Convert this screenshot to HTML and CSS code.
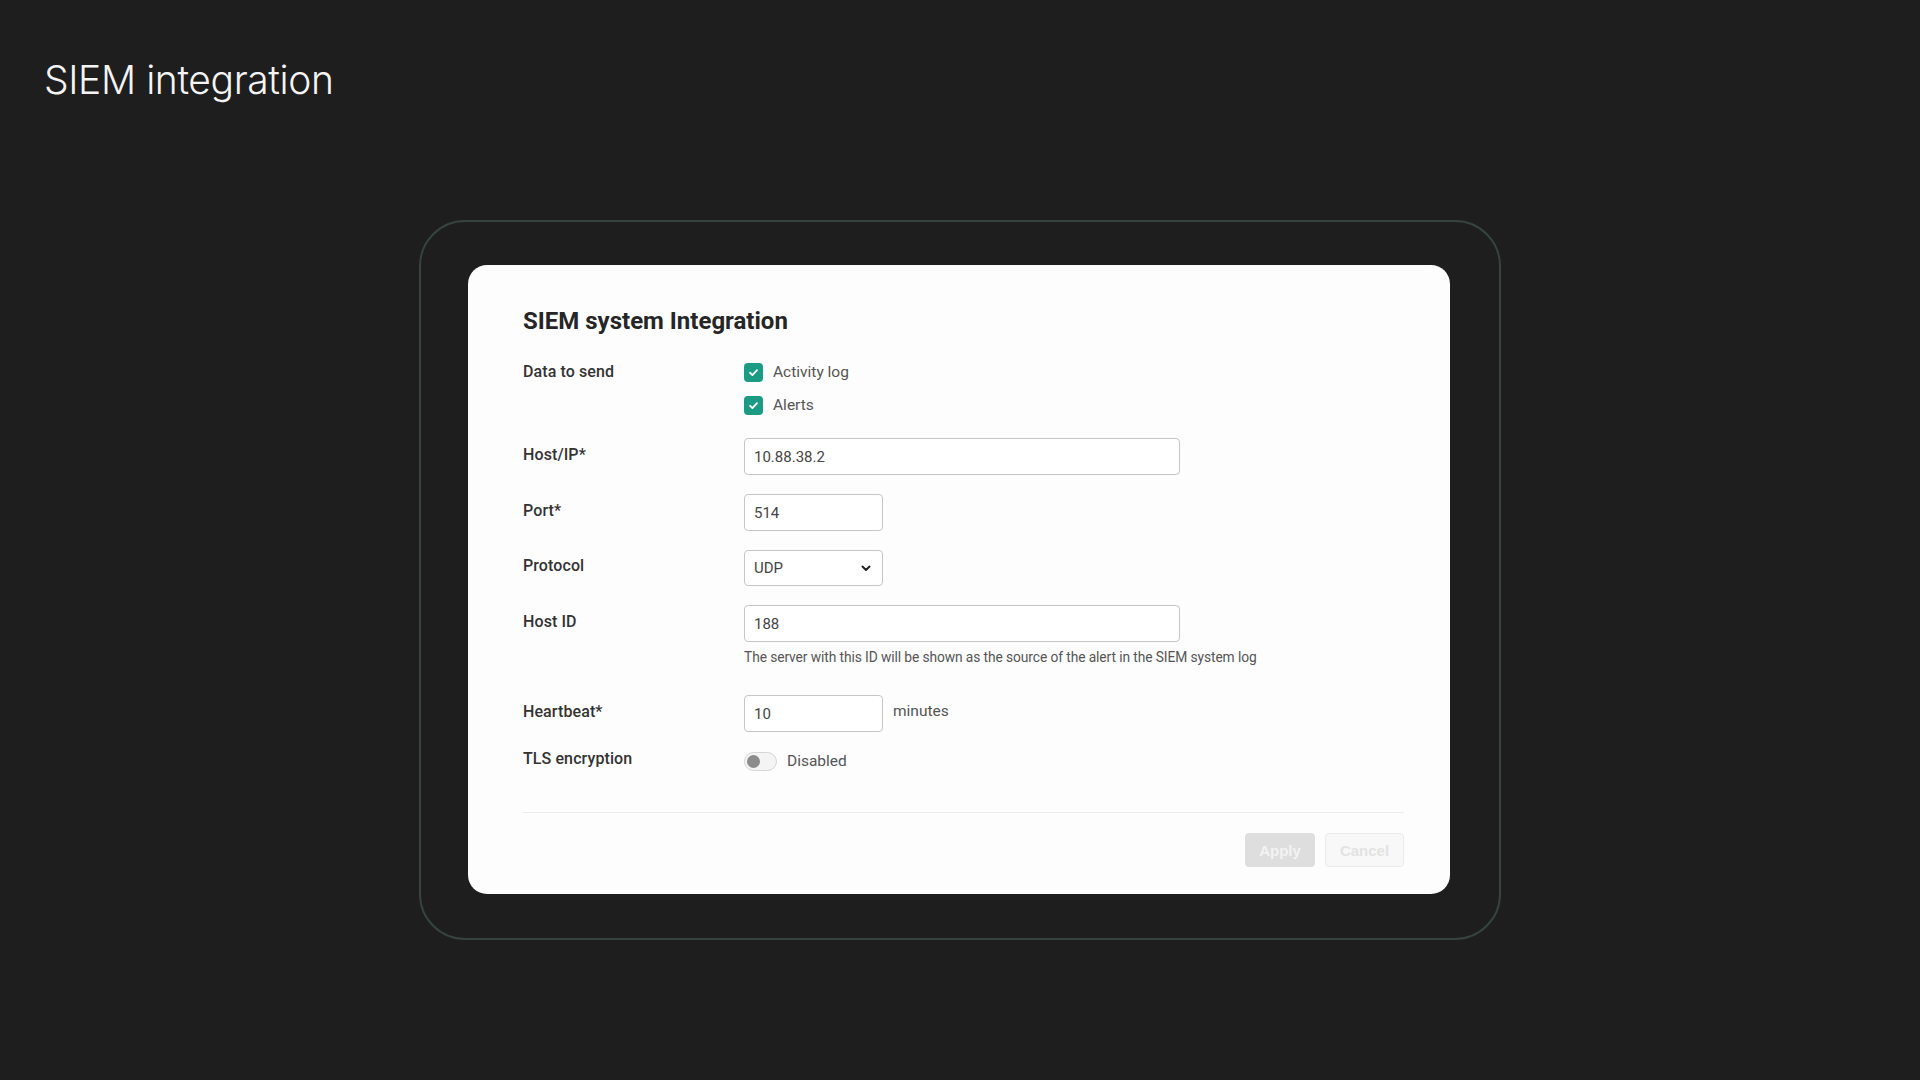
FILE: index.html
```html
<!DOCTYPE html>
<html lang="en">
<head>
  <meta charset="UTF-8">
  <title>SIEM integration</title>
  <meta name="viewport" content="width=device-width, initial-scale=1.0">
  <link rel="stylesheet" href="styles.css">
</head>
<body>
  <h1 class="page-title">SIEM integration</h1>

  <div class="frame">
    <div class="card">
      <h2>SIEM system Integration</h2>

      <div class="row row-checks">
        <label class="field-label">Data to send</label>
        <div class="checks">
          <label class="check"><span class="box"><svg viewBox="0 0 12 12" width="11" height="11"><path d="M2.2 6.3 4.8 8.8 9.8 3.4" fill="none" stroke="#fff" stroke-width="2" stroke-linecap="round" stroke-linejoin="round"/></svg></span>Activity log</label>
          <label class="check"><span class="box"><svg viewBox="0 0 12 12" width="11" height="11"><path d="M2.2 6.3 4.8 8.8 9.8 3.4" fill="none" stroke="#fff" stroke-width="2" stroke-linecap="round" stroke-linejoin="round"/></svg></span>Alerts</label>
        </div>
      </div>

      <div class="row row-host">
        <label class="field-label">Host/IP*</label>
        <input class="input wide" type="text" value="10.88.38.2">
      </div>

      <div class="row">
        <label class="field-label">Port*</label>
        <input class="input short" type="text" value="514">
      </div>

      <div class="row">
        <label class="field-label">Protocol</label>
        <div class="select">
          <span>UDP</span>
          <svg viewBox="0 0 10 7" width="10" height="7"><path d="M1.5 1.5 5 5 8.5 1.5" fill="none" stroke="#222" stroke-width="2" stroke-linecap="round" stroke-linejoin="round"/></svg>
        </div>
      </div>

      <div class="row row-id">
        <label class="field-label">Host ID</label>
        <div>
          <input class="input wide" type="text" value="188">
          <p class="hint">The server with this ID will be shown as the source of the alert in the SIEM system log</p>
        </div>
      </div>

      <div class="row row-heartbeat">
        <label class="field-label">Heartbeat*</label>
        <div class="inline">
          <input class="input short" type="text" value="10">
          <span class="unit">minutes</span>
        </div>
      </div>

      <div class="row row-tls">
        <label class="field-label">TLS encryption</label>
        <div class="inline">
          <span class="toggle"><span class="knob"></span></span>
          <span class="toggle-text">Disabled</span>
        </div>
      </div>

      <div class="footer">
        <button class="btn btn-apply" disabled>Apply</button>
        <button class="btn btn-cancel" disabled>Cancel</button>
      </div>
    </div>
  </div>
</body>
</html>
```

FILE: styles.css
```css
* {
  box-sizing: border-box;
}
body {
  margin: 0;
  min-height: 1080px;
  background: #1e1e1e;
  font-family: Roboto, 'Liberation Sans', sans-serif;
}
.page-title {
  margin: 0;
  padding: 56px 0 0 44px;
  font-family: Inter, 'Liberation Sans', sans-serif;
  font-weight: 300;
  font-size: 39px;
  line-height: 47px;
  letter-spacing: -0.4px;
  color: #f4f4f4;
}
.frame {
  width: 1082px;
  height: 720px;
  margin: 117px auto 0;
  padding: 45px 51px 46px 49px;
  border: 2px solid #35443f;
  border-radius: 46px;
}
.card {
  width: 982px;
  height: 629px;
  margin: -2px 0 0 -2px;
  padding: 41px 46px 0 55px;
  background: #fdfdfd;
  border-radius: 19px;
}
h2 {
  margin: 0 0 24px;
  font-size: 24px;
  line-height: 30px;
  font-weight: 700;
  color: #262626;
}
.row {
  display: grid;
  grid-template-columns: 221px 1fr;
  align-items: center;
  margin-top: 19px;
}
.row-checks {
  align-items: start;
  margin-top: 0;
}
.row-host {
  margin-top: 21px;
}
.row-id,
.row-heartbeat {
  align-items: start;
}
.row-id .field-label,
.row-heartbeat .field-label {
  line-height: 33px;
}
.row-heartbeat {
  margin-top: 29px;
}
.row-tls {
  margin-top: 15px;
}
.field-label {
  padding-bottom: 4px;
  font-size: 16px;
  font-weight: 500;
  line-height: 24px;
  color: #333;
  letter-spacing: 0.1px;
}
.row-checks .field-label {
  padding-bottom: 0;
}
.checks {
  display: flex;
  flex-direction: column;
  gap: 9px;
}
.check {
  display: flex;
  align-items: center;
  gap: 10px;
  height: 24px;
  font-size: 15.5px;
  color: #555;
}
.box {
  display: flex;
  align-items: center;
  justify-content: center;
  width: 19px;
  height: 19px;
  border-radius: 4px;
  background: #1b9b83;
}
.input {
  display: block;
  height: 37px;
  padding: 0 9px;
  border: 1px solid #c6c6c6;
  border-radius: 4px;
  background: #fff;
  font-family: inherit;
  font-size: 15px;
  color: #444;
  outline: none;
}
.wide {
  width: 436px;
}
.short {
  width: 139px;
}
.select {
  display: flex;
  align-items: center;
  justify-content: space-between;
  width: 139px;
  height: 36px;
  padding: 0 11px 0 9px;
  border: 1px solid #c6c6c6;
  border-radius: 4px;
  background: #fff;
  font-size: 15px;
  color: #444;
}
.hint {
  margin: 6px 0 0;
  font-size: 13.8px;
  line-height: 18px;
  color: #555;
  letter-spacing: -0.1px;
}
.inline {
  display: flex;
  align-items: center;
}
.row-heartbeat .inline {
  align-items: flex-start;
}
.unit {
  margin-left: 10px;
  font-size: 15.5px;
  line-height: 33px;
  color: #555;
}
.toggle {
  position: relative;
  width: 33px;
  height: 19px;
  border: 1px solid #d6d6d6;
  border-radius: 10px;
  background: #f4f4f4;
}
.knob {
  position: absolute;
  left: 2px;
  top: 2px;
  width: 13px;
  height: 13px;
  border-radius: 50%;
  background: #8c8c8c;
}
.toggle-text {
  margin-left: 10px;
  font-size: 15.5px;
  color: #555;
}
.footer {
  display: flex;
  justify-content: flex-end;
  gap: 10px;
  margin-top: 37px;
  padding-top: 20px;
  border-top: 1px solid #ececec;
}
.btn {
  height: 34px;
  border-radius: 4px;
  font-family: 'Liberation Sans', Arial, sans-serif;
  font-size: 15px;
  font-weight: 700;
  cursor: default;
}
.btn-apply {
  width: 70px;
  border: none;
  background: #dedede;
  color: #f3f3f3;
}
.btn-cancel {
  width: 79px;
  border: 1px solid #ebebeb;
  background: #f8f8f8;
  color: #e3e3e3;
}
```
